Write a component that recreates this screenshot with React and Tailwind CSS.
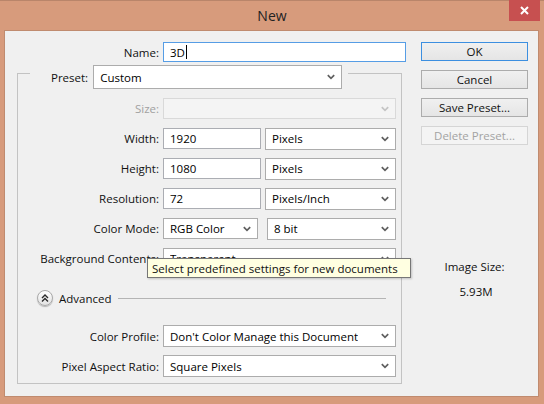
import React from "react";

function Chevron({ disabled }) {
  return (
    <svg width="8" height="6" viewBox="0 0 8 6" className="shrink-0">
      <path
        d="M0.8 1.2 L4 4.4 L7.2 1.2"
        fill="none"
        stroke={disabled ? "#c4c4c4" : "#5f5f5f"}
        strokeWidth="1.7"
      />
    </svg>
  );
}

function Select({ value, cls, disabled, children }) {
  return (
    <div
      className={`flex items-center justify-between border pl-[6px] pr-[6px] ${
        disabled ? "bg-[#f4f4f4] border-[#d9d9d9]" : "bg-white border-[#acacac]"
      } ${cls}`}
    >
      <span className="whitespace-nowrap overflow-hidden">{value}</span>
      {children}
      <Chevron disabled={disabled} />
    </div>
  );
}

function Input({ value, cls, focused, caret }) {
  return (
    <div
      className={`flex items-center bg-white border pl-[6px] ${
        focused ? "border-[#569de5]" : "border-[#abadb3]"
      } ${cls}`}
    >
      <span>{value}</span>
      {caret && <span className="inline-block w-[1px] h-[14px] bg-black ml-[1px]" />}
    </div>
  );
}

function Label({ children, disabled }) {
  return (
    <div
      className={`w-[141px] shrink-0 text-right whitespace-nowrap ${
        disabled ? "text-[#a0a0a0]" : "text-[#111111]"
      }`}
    >
      {children}
    </div>
  );
}

function Button({ children, def, disabled }) {
  return (
    <div
      className={`h-[19px] w-[107px] flex items-center justify-center border ${
        def
          ? "border-[#3c8fe0] bg-gradient-to-b from-[#f0f0f0] to-[#e5e5e5] text-[#111111]"
          : disabled
          ? "border-[#d5d5d5] bg-[#f4f4f4] text-[#a3a3a3]"
          : "border-[#acacac] bg-gradient-to-b from-[#f0f0f0] to-[#e5e5e5] text-[#111111]"
      }`}
    >
      {children}
    </div>
  );
}

export default function App() {
  return (
    <div className="w-[544px] h-[404px] bg-[#d79b7c] flex flex-col font-['Open_Sans','Noto_Sans',sans-serif] text-[11.5px] leading-[15px] overflow-hidden">
      {/* Title bar */}
      <div className="relative h-[30px] shrink-0 flex items-center justify-center border-t border-[#b9856a]">
        <span className="text-[14px] text-[#222222] leading-none mt-[1px]">New</span>
        <div className="absolute right-[4px] top-[-1px] w-[31px] h-[21px] bg-[#c75050] flex items-center justify-center">
          <svg width="9" height="9" viewBox="0 0 9 9">
            <path d="M1 1 L8 8 M8 1 L1 8" stroke="#ffffff" strokeWidth="2" />
          </svg>
        </div>
      </div>

      {/* Client area */}
      <div className="relative ml-[4px] w-[535px] h-[367px] bg-[#f0f0f0] border border-[#c08b6f] flex">
        {/* Left column */}
        <div className="flex flex-col">
          {/* Name row */}
          <div className="flex items-center gap-[4px] mt-[11px]">
            <div className="w-[154px] text-right text-[#111111]">Name:</div>
            <Input value="3D" cls="w-[243px] h-[20px]" focused caret />
          </div>

          {/* Group box */}
          <div className="ml-[12px] mt-[11px] w-[385px] border border-[#c3c3c3] flex flex-col pb-[6px]">
            {/* Preset legend */}
            <div className="-mt-[9px] ml-[12px] w-fit bg-[#f0f0f0] pl-[21px] pr-[6px] flex items-center gap-[5px] h-[24px]">
              <div className="text-[#111111]">Preset:</div>
              <Select value="Custom" cls="w-[249px] h-[24px]" />
            </div>

            <div className="flex items-center gap-[4px] mt-[9px] h-[21px]">
              <Label disabled>Size:</Label>
              <Select value="" cls="w-[233px] h-[21px]" disabled />
            </div>

            <div className="flex items-center gap-[4px] mt-[9px] h-[21px]">
              <Label>Width:</Label>
              <Input value="1920" cls="w-[98px] h-[21px]" />
              <Select value="Pixels" cls="w-[131px] h-[22px]" />
            </div>

            <div className="flex items-center gap-[4px] mt-[9px] h-[21px]">
              <Label>Height:</Label>
              <Input value="1080" cls="w-[98px] h-[21px]" />
              <Select value="Pixels" cls="w-[131px] h-[22px]" />
            </div>

            <div className="flex items-center gap-[4px] mt-[9px] h-[21px]">
              <Label>Resolution:</Label>
              <Input value="72" cls="w-[98px] h-[21px]" />
              <Select value="Pixels/Inch" cls="w-[131px] h-[22px]" />
            </div>

            <div className="flex items-center gap-[4px] mt-[9px] h-[21px]">
              <Label>Color Mode:</Label>
              <Select value="RGB Color" cls="w-[95px] h-[21px]" />
              <Select value="8 bit" cls="w-[129px] h-[22px] ml-[5px]" />
            </div>

            <div className="flex items-center gap-[4px] mt-[9px] h-[21px]">
              <Label>Background Contents:</Label>
              <Select value="Transparent" cls="w-[233px] h-[21px]" />
            </div>

            {/* Advanced */}
            <div className="flex items-center mt-[21px] h-[16px] pl-[19px] pr-[15px]">
              <div className="w-[16px] h-[16px] rounded-full border border-[#a9a9a9] bg-gradient-to-b from-[#ffffff] to-[#e2e2e2] shadow-[0_1px_1px_rgba(0,0,0,0.25)] flex items-center justify-center">
                <svg width="10" height="10" viewBox="0 0 10 10">
                  <path
                    d="M2 5 L5 2 L8 5 M2 8.5 L5 5.5 L8 8.5"
                    fill="none"
                    stroke="#2a2a2a"
                    strokeWidth="1.4"
                  />
                </svg>
              </div>
              <span className="ml-[6px] text-[#111111] text-[11.5px]">Advanced</span>
              <div className="ml-[6px] flex-1 h-[1px] bg-[#b4b4b4]" />
            </div>

            <div className="flex items-center gap-[4px] mt-[19px] h-[22px]">
              <Label>Color Profile:</Label>
              <Select value="Don't Color Manage this Document" cls="w-[233px] h-[22px]" />
            </div>

            <div className="flex items-center gap-[4px] mt-[8px] h-[22px]">
              <Label>Pixel Aspect Ratio:</Label>
              <Select value="Square Pixels" cls="w-[233px] h-[22px]" />
            </div>
          </div>
        </div>

        {/* Right column */}
        <div className="ml-[15px] pt-[11px] flex flex-col items-center w-[107px]">
          <div className="flex flex-col gap-[9px]">
            <Button def>OK</Button>
            <Button>Cancel</Button>
            <Button>Save Preset...</Button>
            <Button disabled>Delete Preset...</Button>
          </div>
          <div className="mt-[114px] text-[#111111] leading-[16px]">Image Size:</div>
          <div className="mt-[9px] text-[#111111] leading-[16px] ml-[3px]">5.93M</div>
        </div>

        {/* Tooltip */}
        <div className="absolute left-[142px] top-[227px] w-[264px] h-[20px] bg-[#ffffe1] border border-[#767676] shadow-[1px_1px_2px_rgba(0,0,0,0.2)] flex items-center pl-[4px] text-[#111111] whitespace-nowrap">
          Select predefined settings for new documents
        </div>
      </div>
    </div>
  );
}
